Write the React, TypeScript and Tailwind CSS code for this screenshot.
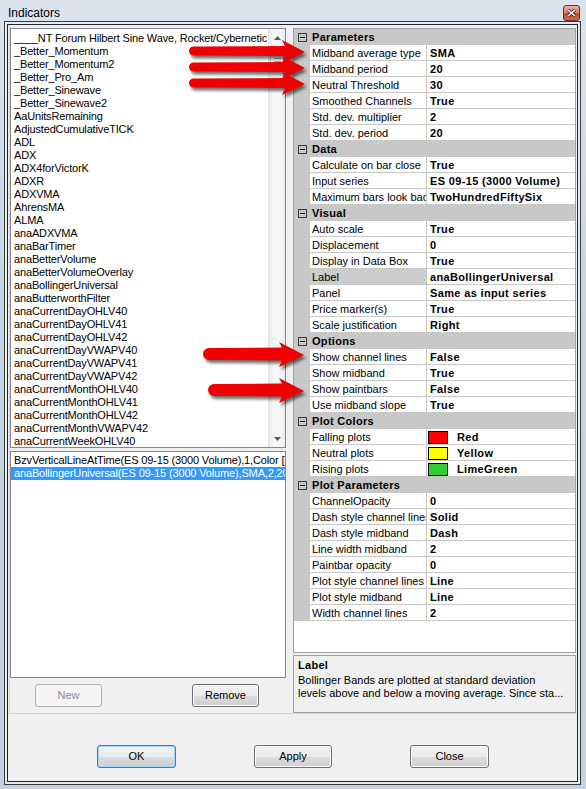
import React from "react";

const list1 = [
  "____NT Forum Hilbert Sine Wave, Rocket/Cybernetic",
  "_Better_Momentum",
  "_Better_Momentum2",
  "_Better_Pro_Am",
  "_Better_Sinewave",
  "_Better_Sinewave2",
  "AaUnitsRemaining",
  "AdjustedCumulativeTICK",
  "ADL",
  "ADX",
  "ADX4forVictorK",
  "ADXR",
  "ADXVMA",
  "AhrensMA",
  "ALMA",
  "anaADXVMA",
  "anaBarTimer",
  "anaBetterVolume",
  "anaBetterVolumeOverlay",
  "anaBollingerUniversal",
  "anaButterworthFilter",
  "anaCurrentDayOHLV40",
  "anaCurrentDayOHLV41",
  "anaCurrentDayOHLV42",
  "anaCurrentDayVWAPV40",
  "anaCurrentDayVWAPV41",
  "anaCurrentDayVWAPV42",
  "anaCurrentMonthOHLV40",
  "anaCurrentMonthOHLV41",
  "anaCurrentMonthOHLV42",
  "anaCurrentMonthVWAPV42",
  "anaCurrentWeekOHLV40",
];

type Row =
  | { cat: string }
  | { label: string; value: string; color?: string; selected?: boolean };

const rows: Row[] = [
  { cat: "Parameters" },
  { label: "Midband average type", value: "SMA" },
  { label: "Midband period", value: "20" },
  { label: "Neutral Threshold", value: "30" },
  { label: "Smoothed Channels", value: "True" },
  { label: "Std. dev. multiplier", value: "2" },
  { label: "Std. dev. period", value: "20" },
  { cat: "Data" },
  { label: "Calculate on bar close", value: "True" },
  { label: "Input series", value: "ES 09-15 (3000 Volume)" },
  { label: "Maximum bars look back", value: "TwoHundredFiftySix" },
  { cat: "Visual" },
  { label: "Auto scale", value: "True" },
  { label: "Displacement", value: "0" },
  { label: "Display in Data Box", value: "True" },
  { label: "Label", value: "anaBollingerUniversal", selected: true },
  { label: "Panel", value: "Same as input series" },
  { label: "Price marker(s)", value: "True" },
  { label: "Scale justification", value: "Right" },
  { cat: "Options" },
  { label: "Show channel lines", value: "False" },
  { label: "Show midband", value: "True" },
  { label: "Show paintbars", value: "False" },
  { label: "Use midband slope", value: "True" },
  { cat: "Plot Colors" },
  { label: "Falling plots", value: "Red", color: "#ff0000" },
  { label: "Neutral plots", value: "Yellow", color: "#ffff00" },
  { label: "Rising plots", value: "LimeGreen", color: "#32cd32" },
  { cat: "Plot Parameters" },
  { label: "ChannelOpacity", value: "0" },
  { label: "Dash style channel lines", value: "Solid" },
  { label: "Dash style midband", value: "Dash" },
  { label: "Line width midband", value: "2" },
  { label: "Paintbar opacity", value: "0" },
  { label: "Plot style channel lines", value: "Line" },
  { label: "Plot style midband", value: "Line" },
  { label: "Width channel lines", value: "2" },
];

function WinButton({
  children,
  w,
  variant = "normal",
}: {
  children: React.ReactNode;
  w: string;
  variant?: "normal" | "default" | "disabled";
}) {
  const base =
    "h-[23px] rounded-[3px] border flex items-center justify-center text-[11px] leading-none";
  if (variant === "disabled") {
    return (
      <div className={`${base} ${w} border-[#adb2b5] bg-[#f4f4f4] text-[#8d8d8d]`}>
        {children}
      </div>
    );
  }
  if (variant === "default") {
    return (
      <div
        className={`${base} ${w} border-[#3c7fb1] bg-[linear-gradient(to_bottom,#f2f2f2_0%,#ebebeb_50%,#dddddd_50%,#cfcfcf_100%)] shadow-[inset_0_0_0_1px_#9fd6f7] text-black`}
      >
        {children}
      </div>
    );
  }
  return (
    <div
      className={`${base} ${w} border-[#707070] bg-[linear-gradient(to_bottom,#f2f2f2_0%,#ebebeb_50%,#dddddd_50%,#cfcfcf_100%)] shadow-[inset_0_0_0_1px_#fafafa] text-black`}
    >
      {children}
    </div>
  );
}

function ScrollBar() {
  return (
    <div className="flex h-full w-[17px] flex-col border-l border-[#e3e3e3] bg-[linear-gradient(to_right,#e9e9e9,#f6f6f6_30%,#f6f6f6_70%,#ececec)]">
      <div className="flex h-[17px] items-center justify-center">
        <svg width="7" height="4" viewBox="0 0 7 4">
          <polygon points="0,4 3.5,0 7,4" fill="#5a5a5a" />
        </svg>
      </div>
      <div className="mx-[1px] flex h-[24px] flex-col items-center justify-center gap-[2px] rounded-[2px] border border-[#c8c8c8] bg-[linear-gradient(to_right,#f3f3f3,#e8e8e8)]">
        <div className="h-[1px] w-[7px] bg-[#a0a0a0]" />
        <div className="h-[1px] w-[7px] bg-[#a0a0a0]" />
        <div className="h-[1px] w-[7px] bg-[#a0a0a0]" />
      </div>
      <div className="flex-1" />
      <div className="flex h-[17px] items-center justify-center">
        <svg width="7" height="4" viewBox="0 0 7 4">
          <polygon points="0,0 3.5,4 7,0" fill="#5a5a5a" />
        </svg>
      </div>
    </div>
  );
}

function MinusBox() {
  return (
    <div className="flex h-[9px] w-[9px] items-center justify-center border border-[#3a3a3a]">
      <div className="h-[1px] w-[5px] bg-black" />
    </div>
  );
}

function GridRow({ row }: { row: Row }) {
  if ("cat" in row) {
    return (
      <div className="flex h-[16px] items-center bg-[#c8c8c8]">
        <div className="flex w-[16px] justify-center">
          <MinusBox />
        </div>
        <span className="pl-[2px] text-[11px] font-bold leading-[15px] tracking-[0.3px]">
          {row.cat}
        </span>
      </div>
    );
  }
  return (
    <div className="flex h-[16px]">
      <div className="w-[16px] bg-[#c8c8c8]" />
      <div
        className={`w-[117px] overflow-hidden whitespace-nowrap border-b border-r border-[#c8c8c8] pl-[2px] pt-[1px] text-[11px] leading-[14px] ${
          row.selected ? "bg-[#cccccc]" : "bg-white"
        }`}
      >
        {row.label}
      </div>
      <div className="flex flex-1 items-center overflow-hidden whitespace-nowrap border-b border-[#c8c8c8] pt-[1px] text-[11px] font-bold leading-[14px] tracking-[0.35px]">
        {row.color ? (
          <>
            <div
              className="ml-[1px] h-[13px] w-[20px] border border-black"
              style={{ backgroundColor: row.color }}
            />
            <span className="ml-[9px]">{row.value}</span>
          </>
        ) : (
          <span className="pl-[3px]">{row.value}</span>
        )}
      </div>
    </div>
  );
}

function arrowPath(x1: number, y: number, x2: number, t: number, h: number, L: number) {
  const hx = x2 - L;
  return `M ${x1 + t} ${y - t} L ${hx} ${y - t - 0.5} L ${hx - 3} ${y - h} L ${x2} ${y + 1} L ${hx - 3} ${y + h + 1} L ${hx} ${y + t + 0.5} L ${x1 + t} ${y + t} A ${t} ${t} 0 0 1 ${x1 + t} ${y - t} Z`;
}

function Arrows() {
  const arrows = [
    { x1: 189, y: 51, x2: 305, t: 4.5, h: 11, L: 20 },
    { x1: 189, y: 67, x2: 305, t: 4.5, h: 11, L: 20 },
    { x1: 189, y: 83, x2: 305, t: 4.5, h: 11, L: 20 },
    { x1: 203, y: 354, x2: 304, t: 6, h: 12, L: 22 },
    { x1: 208, y: 390, x2: 304, t: 6, h: 12, L: 22 },
  ];
  return (
    <svg
      className="pointer-events-none absolute left-0 top-0"
      width="586"
      height="789"
      viewBox="0 0 586 789"
    >
      <defs>
        <filter id="ashadow" x="-20%" y="-50%" width="140%" height="200%">
          <feGaussianBlur stdDeviation="1.6" />
        </filter>
      </defs>
      {arrows.map((a, i) => (
        <g key={i}>
          <path
            d={arrowPath(a.x1, a.y, a.x2, a.t, a.h, a.L)}
            transform="translate(2 3)"
            fill="#000"
            opacity="0.55"
            filter="url(#ashadow)"
          />
          <path d={arrowPath(a.x1, a.y, a.x2, a.t, a.h, a.L)} fill="#f00000" />
        </g>
      ))}
    </svg>
  );
}

export default function App() {
  return (
    <div className="relative flex h-[789px] w-[586px] flex-col overflow-hidden bg-[linear-gradient(to_bottom,#dbe4ee,#c6d4e3_40%,#c3d1e1)] font-['Liberation_Sans',Arial,sans-serif] text-black">
      {/* Title bar */}
      <div className="flex h-[21px] shrink-0 items-start justify-between pl-[8px] pr-[6px] pt-[5px]">
        <span className="text-[12px] leading-[16px]">Indicators</span>
        <div className="flex h-[16px] w-[17px] items-center justify-center rounded-[3px] border border-[#6b2f2a] bg-[linear-gradient(to_bottom,#eab1a3,#d97a63_50%,#c4452b_55%,#d3674c)]">
          <svg width="9" height="8" viewBox="0 0 9 8">
            <path d="M1 1 L8 7 M8 1 L1 7" stroke="#5a1a12" strokeWidth="3" />
            <path d="M1 1 L8 7 M8 1 L1 7" stroke="#ffffff" strokeWidth="1.6" />
          </svg>
        </div>
      </div>

      {/* Frame */}
      <div className="mb-[4px] ml-[4px] mr-[5px] flex-1 border border-[#3a3a3a] bg-[#e4ebf3] p-[2px]">
        <div className="h-full border border-[#262626]">
          <div className="flex h-full flex-col bg-[#f0f0f0]">
            {/* Top section */}
            <div className="flex h-[689px] shrink-0 border-b border-[#d5d5d5]">
              {/* Left panel */}
              <div className="ml-[1px] flex w-[280px] flex-col border-l border-[#d5d5d5] pt-[3px]">
                <div className="flex h-[420px] w-[276px] border border-[#828790] bg-white">
                  <div className="flex-1 overflow-hidden pl-[3px] pt-[2px]">
                    {list1.map((t) => (
                      <div
                        key={t}
                        className="h-[13px] whitespace-nowrap text-[11px] leading-[14px] tracking-[-0.15px]"
                      >
                        {t}
                      </div>
                    ))}
                  </div>
                  <ScrollBar />
                </div>
                <div className="mt-[3px] h-[227px] w-[276px] overflow-hidden border border-[#828790] bg-white pt-[2px]">
                  <div className="h-[13px] overflow-hidden whitespace-nowrap pl-[3px] text-[11px] leading-[13px] tracking-[-0.15px]">
                    BzvVerticalLineAtTime(ES 09-15 (3000 Volume),1,Color [Red],2)
                  </div>
                  <div className="h-[13px] overflow-hidden whitespace-nowrap bg-[#3399ff] pl-[3px] text-[11px] leading-[13px] tracking-[-0.15px] text-white">
                    anaBollingerUniversal(ES 09-15 (3000 Volume),SMA,2,20,30)
                  </div>
                </div>
                <div className="mt-[6px] flex gap-[90px] pl-[25px]">
                  <WinButton w="w-[67px]" variant="disabled">
                    New
                  </WinButton>
                  <WinButton w="w-[67px]">Remove</WinButton>
                </div>
              </div>

              {/* Right panel */}
              <div className="ml-[4px] flex flex-col pt-[3px]">
                <div className="h-[625px] w-[283px] overflow-hidden border border-[#a0a0a0] bg-white">
                  {rows.map((r, i) => (
                    <GridRow key={i} row={r} />
                  ))}
                </div>
                <div className="mt-[2px] h-[58px] w-[283px] border border-[#a0a0a0] bg-[#f0f0f0] pl-[4px] pt-[3px] text-[11px] leading-[13px]">
                  <div className="font-bold tracking-[0.3px]">Label</div>
                  <div className="mt-[2px] whitespace-nowrap">
                    Bollinger Bands are plotted at standard deviation
                  </div>
                  <div className="whitespace-nowrap">
                    levels above and below a moving average. Since sta...
                  </div>
                </div>
              </div>
            </div>

            {/* Bottom buttons */}
            <div className="flex flex-1 items-start gap-[78px] pl-[89px] pt-[31px]">
              <WinButton w="w-[79px]" variant="default">
                OK
              </WinButton>
              <WinButton w="w-[78px]">Apply</WinButton>
              <WinButton w="w-[79px]">Close</WinButton>
            </div>
          </div>
        </div>
      </div>

      <Arrows />
    </div>
  );
}
